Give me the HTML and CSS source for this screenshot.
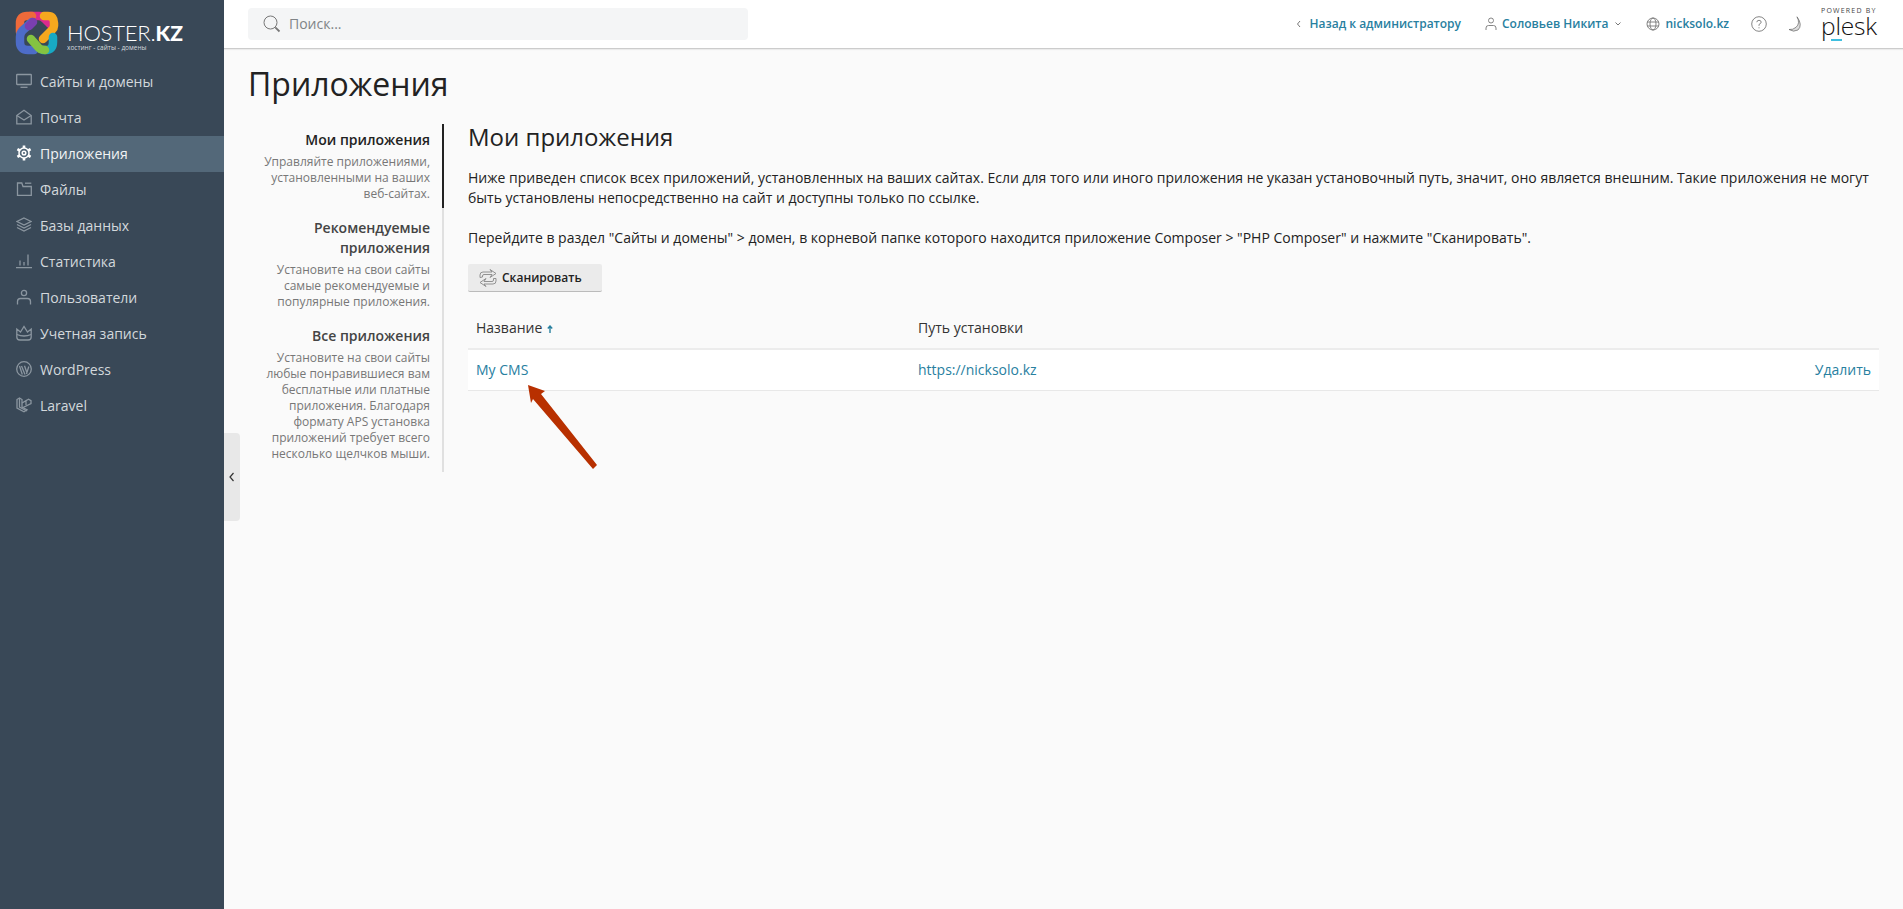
FILE: index.html
```html
<!DOCTYPE html>
<html lang="ru">
<head>
<meta charset="utf-8">
<title>Приложения</title>
<link rel="stylesheet" href="styles.css">
</head>
<body>
<div class="page">
  <aside class="sidebar">
    <div class="brand">
      <svg class="brand-mark" viewBox="0 0 50 50" width="50" height="50" fill="none" stroke-width="8.500" stroke-linecap="round">
        <path d="M18 8H27Q30 8 33 11L38 16" stroke="#d92a8e"/>
        <path d="M8 24V15Q8 8 15 8H20" stroke="#ef6a3a"/>
        <path d="M32 8H36Q42 8 42 15V18Q42 20 40 22L31 31" stroke="#f6a81e"/>
        <path d="M20 14 11 22Q8 25 8 29V34Q8 42 16 42H22" stroke="#4d6cc8"/>
        <path d="M21 14 17 18" stroke="#7a3fb0"/>
        <path d="M41 29V34Q41 42 34 42H31" stroke="#18a9c4"/>
        <path d="M19 31 26 39Q28 42 33 42" stroke="#84c341"/>
      </svg>
      <div class="brand-text">
        <div class="brand-name">HOSTER.<b>KZ</b></div>
        <div class="brand-sub">хостинг - сайты - домены</div>
      </div>
    </div>
    <nav class="nav">
      <a class="nav-item"><svg class="nav-icon" viewBox="0 0 16 16"><rect x=".7" y="1.500" width="14.600" height="10" rx=".5"/><path d="M4.500 14.300h7"/></svg>Сайты и домены</a>
      <a class="nav-item"><svg class="nav-icon" viewBox="0 0 16 16"><path d="M.8 6.500 8 1.200l7.200 5.300v8.300H.8z"/><path d="M.8 6.500 8 11l7.200-4.500"/></svg>Почта</a>
      <a class="nav-item active"><svg class="nav-icon gear" viewBox="0 0 16 16"><circle cx="8" cy="8" r="5"/><circle cx="8" cy="8" r="1.800"/><path class="teeth" d="M8 .4v2.600M8 13v2.600M1.400 4.200l2.300 1.300M12.300 10.500l2.300 1.300M1.400 11.800l2.300-1.300M12.300 5.500l2.300-1.300"/></svg>Приложения</a>
      <a class="nav-item"><svg class="nav-icon" viewBox="0 0 16 16"><path d="M1.500 2v12.300h13.800V5.500H7L5.800 2z"/><path d="M9 2.200h6.300"/></svg>Файлы</a>
      <a class="nav-item"><svg class="nav-icon" viewBox="0 0 16 16"><path d="M8 1 15 4.500 8 8 1 4.500z"/><path d="M1 7.500l7 3.500 7-3.500"/><path d="M1 10.500 8 14l7-3.500"/></svg>Базы данных</a>
      <a class="nav-item"><svg class="nav-icon" viewBox="0 0 16 16"><path d="M0 14.700h16M4 7.500v5M8 9v3.500M12 1.500v11"/></svg>Статистика</a>
      <a class="nav-item"><svg class="nav-icon" viewBox="0 0 16 16"><circle cx="8" cy="4" r="2.600"/><path d="M1.500 15.500v-3q0-3 3-3h7q3 0 3 3v3"/></svg>Пользователи</a>
      <a class="nav-item"><svg class="nav-icon" viewBox="0 0 16 16"><path d="M.8 4v8q0 3 3 3h8.400q3 0 3-3V4L11.500 7 8 1.500 4.500 7z"/><path d="M.8 9.500q7.200 3 14.400 0"/></svg>Учетная запись</a>
      <a class="nav-item"><svg class="nav-icon" viewBox="0 0 16 16"><circle cx="8" cy="8" r="7.300"/><path d="M3.500 5 6.300 13.500M5.500 5l3.500 8.500M8.500 4.800 11 12M12.800 5.500 10.500 13" stroke-width="1.300"/></svg>WordPress</a>
      <a class="nav-item"><svg class="nav-icon" viewBox="0 0 16 16"><path d="M1 2.500 3.500 1 6 2.500V10l5 2.800-3 1.900L1 11z"/><path d="M3.500 1v9l7.500 4M6 6l4-2.300V8M10 3.700l2.500-1.400L15 3.700v2.800L6 11"/></svg>Laravel</a>
    </nav>
  </aside>

  <button class="collapse" aria-label="Свернуть">
    <svg viewBox="0 0 6 10" width="6" height="10"><path d="M4.500 1 1 5l3.500 4"/></svg>
  </button>

  <div class="content">
    <header class="topbar">
      <div class="search">
        <svg class="search-icon" viewBox="0 0 18 18" width="18" height="18"><circle cx="7.500" cy="7.500" r="6.500"/><path d="M12.300 12.300 16.500 16.500" stroke-width="1.800"/></svg>
        <span>Поиск...</span>
      </div>
      <div class="top-links">
        <a class="top-link back"><svg class="chev" viewBox="0 0 6 8" width="6" height="8"><path d="M4 1 1.500 4 4 7"/></svg>Назад к администратору</a>
        <a class="top-link user"><svg class="top-icon" viewBox="0 0 12 14" width="12" height="14"><circle cx="6" cy="3.500" r="2.500"/><path d="M1 13v-2q0-2.500 2.500-2.500h5Q11 8.500 11 11v2"/></svg>Соловьев Никита<svg class="chev" viewBox="0 0 8 6" width="8" height="6"><path d="M1.500 1.500 4 4l2.500-2.500"/></svg></a>
        <a class="top-link domain"><svg class="top-icon" viewBox="0 0 14 14" width="14" height="14"><circle cx="7" cy="7" r="6"/><ellipse cx="7" cy="7" rx="3" ry="6"/><path d="M1 5h12M1 9h12"/></svg>nicksolo.kz</a>
        <svg class="help" viewBox="0 0 16 16" width="16" height="16"><circle cx="8" cy="8" r="7.300"/><path d="M5.800 6.200Q6 4.300 8 4.300t2.200 1.800Q10.200 7.300 8 8.500v1.300M8 11.300v1"/></svg>
        <svg class="moon" viewBox="0 0 14 16" width="14" height="16"><path d="M9 .8q3.500 6.500-1 10.500-3 2.700-7 2.200 4.500 3 9 .5Q15 9 9 .8z"/></svg>
        <div class="plesk">
          <div class="plesk-top">POWERED BY</div>
          <div class="plesk-name">plesk</div>
          <div class="plesk-mark"></div>
        </div>
      </div>
    </header>

    <main class="main">
      <h1 class="page-title">Приложения</h1>
      <div class="columns">
        <div class="tabs">
          <div class="tab current">
            <div class="tab-title">Мои приложения</div>
            <div class="tab-desc">Управляйте приложениями, установленными на ваших веб-сайтах.</div>
          </div>
          <div class="tab">
            <div class="tab-title">Рекомендуемые приложения</div>
            <div class="tab-desc">Установите на свои сайты самые рекомендуемые и популярные приложения.</div>
          </div>
          <div class="tab">
            <div class="tab-title">Все приложения</div>
            <div class="tab-desc">Установите на свои сайты любые понравившиеся вам бесплатные или платные приложения. Благодаря формату APS установка приложений требует всего несколько щелчков мыши.</div>
          </div>
        </div>
        <section class="panel">
          <h2 class="panel-title">Мои приложения</h2>
          <p class="text">Ниже приведен список всех приложений, установленных на ваших сайтах. Если для того или иного приложения не указан установочный путь, значит, оно является внешним. Такие приложения не могут быть установлены непосредственно на сайт и доступны только по ссылке.</p>
          <p class="text">Перейдите в раздел "Сайты и домены" &gt; домен, в корневой папке которого находится приложение Composer &gt; "PHP Composer" и нажмите "Сканировать".</p>
          <button class="scan">
            <svg viewBox="0 0 20 20" width="20" height="20"><path d="M2 9.500V7Q2 4 5 4h9l-2-2.500L18 5.500l-6 4 2-3H6Q4.500 6.500 4.500 8v1z"/><path d="M18 10.500V13q0 3-3 3H6l2 2.500-6-4 6-4-2 3h8q1.500 0 1.500-1.500v-1.500z"/></svg>
            Сканировать
          </button>
          <div class="table">
            <div class="thead">
              <div class="col-name">Название<svg class="sort" viewBox="0 0 6 8" width="6" height="8"><path d="M3 8V1.500M.8 3.500 3 1l2.200 2.500"/></svg></div>
              <div class="col-path">Путь установки</div>
            </div>
            <div class="row">
              <a class="col-name link">My CMS</a>
              <a class="col-path link">https://nicksolo.kz</a>
              <a class="link">Удалить</a>
            </div>
          </div>
        </section>
      </div>
    </main>
  </div>

  <svg class="arrow" viewBox="0 0 72 87" width="72" height="87"><path d="M2 2 19 8 15 11 71 82 67 86 7 16 5 20z" fill="#b83000"/></svg>
</div>
</body>
</html>
```

FILE: styles.css
```css
* { box-sizing: border-box; }
html, body { margin: 0; height: 100%; }
body { font-family: "Open Sans", "Noto Sans", sans-serif; font-size: 14px; color: #222; background: #fafafa; overflow: hidden; }
a { text-decoration: none; }
.page { position: relative; display: flex; width: 1903px; height: 909px; }

.sidebar { width: 224px; flex: none; background: #394857; color: #d8dde1; }
.brand { height: 64px; padding: 8px 0 0 12px; display: flex; align-items: flex-start; }
.brand-mark { flex: none; }
.brand-text { margin: 14px 0 0 5px; color: #fff; }
.brand-name { font-family: "Lato", "Open Sans", sans-serif; font-size: 22px; line-height: 22px; letter-spacing: -.2px; font-weight: 300; white-space: nowrap; }
.brand-name b { font-weight: 900; font-size: 21px; letter-spacing: .3px; }
.brand-sub { font-size: 6.5px; line-height: 9px; margin-top: -1px; color: #d5d9dd; white-space: nowrap; }

.nav { display: flex; flex-direction: column; }
.nav-item { height: 36px; display: flex; align-items: center; padding: 0 0 2px 16px; color: #d3d8dc; font-size: 14px; white-space: nowrap; }
.nav-item.active { background: #536879; color: #f2f4f5; }
.nav-icon { width: 16px; height: 16px; margin-right: 8px; flex: none; fill: none; stroke: #8b96a0; stroke-width: 1.3; }
.nav-item.active .nav-icon { stroke: #fff; stroke-width: 1.5; }
.nav-item.active .nav-icon .teeth { stroke-width: 2.6; }

.collapse { position: absolute; left: 224px; top: 433px; width: 16px; height: 88px; padding: 0; border: 0; background: #e8e8e8; border-radius: 0 4px 4px 0; display: flex; align-items: center; justify-content: center; }
.collapse svg { fill: none; stroke: #333; stroke-width: 1.2; }

.content { flex: 1; min-width: 0; display: flex; flex-direction: column; }
.topbar { height: 49px; flex: none; background: #fff; border-bottom: 1px solid #ccc; box-shadow: 0 1px 1px rgba(0,0,0,.06); display: flex; align-items: center; justify-content: space-between; padding: 0 22px 1px 24px; }
.search { width: 500px; height: 32px; background: #f4f5f6; border-radius: 4px; display: flex; align-items: center; padding-left: 15px; color: #808487; font-size: 14px; }
.search-icon { margin-right: 8px; fill: none; stroke: #777; stroke-width: 1; }
.top-links { display: flex; align-items: center; }
.top-link { display: flex; align-items: center; color: #28809f; font-size: 12px; font-weight: 600; white-space: nowrap; }
.back { margin-right: 24px; }
.back .chev { margin-right: 7px; }
.user { margin-right: 24px; }
.user .chev { margin-left: 6px; }
.domain { margin-right: 22px; }
.chev { fill: none; stroke: #777; stroke-width: 1; }
.top-icon { margin-right: 5px; fill: none; stroke: #777; stroke-width: .9; }
.help { margin-right: 21px; fill: none; stroke: #777; stroke-width: .9; }
.moon { margin-right: 19px; fill: #ddd; stroke: #666; stroke-width: .7; }
.plesk { position: relative; width: 60px; height: 44px; color: #111; }
.plesk-top { font-size: 7px; letter-spacing: 1.2px; line-height: 8px; margin-top: 5px; white-space: nowrap; color: #444; }
.plesk-name { font-size: 24.5px; line-height: 22px; letter-spacing: -.2px; font-weight: 300; }
.plesk-mark { position: absolute; left: 10px; top: 37px; width: 11px; height: 2px; background: #3fbfe0; }

.main { flex: 1; padding: 0 24px; }
.page-title { margin: 15px 0 0; height: 40px; font-size: 32px; line-height: 40px; font-weight: 400; color: #222; }
.columns { display: flex; margin-top: 20px; align-items: flex-start; }
.tabs { width: 196px; flex: none; border-right: 2px solid #e0e0e0; text-align: right; }
.tab { padding: 6px 12px 10px 0; }
.tab.current { border-right: 2px solid #222; margin: 0 -2px 4px 0; padding-bottom: 6px; }
.tab-title { font-size: 14px; line-height: 20px; font-weight: 600; color: #444; }
.tab.current .tab-title { color: #222; }
.tab-desc { font-size: 12px; line-height: 16px; color: #777; margin-top: 4px; }

.panel { flex: 1; min-width: 0; margin-left: 24px; }
.panel-title { margin: -2px 0 0; font-size: 24px; line-height: 30px; font-weight: 400; color: #222; }
.text { margin: 16px 0 0; font-size: 14px; line-height: 20px; color: #222; }
.text + .text { margin-top: 20px; }
.scan { margin-top: 16px; height: 28px; width: 134px; padding: 0 0 0 10px; border: 0; border-bottom: 1px solid #bbb; border-radius: 2px; background: #ebebeb; display: flex; align-items: center; gap: 4px; font-family: inherit; font-size: 12px; font-weight: 600; color: #222; }
.scan svg { fill: none; stroke: #888; stroke-width: .9; }

.table { margin-top: 21px; }
.thead { height: 37px; display: flex; align-items: center; padding: 0 8px 7px; border-bottom: 2px solid #ececec; font-size: 14px; color: #333; }
.row { height: 41px; display: flex; align-items: center; padding: 0 8px 2px; background: #fff; border-bottom: 1px solid #e8e8e8; font-size: 14px; }
.col-name { width: 442px; flex: none; }
.col-path { flex: 1; }
.link { color: #28809f; }
.sort { margin-left: 5px; fill: none; stroke: #28809f; stroke-width: 1.4; }

.arrow { position: absolute; left: 526px; top: 383px; }
```
